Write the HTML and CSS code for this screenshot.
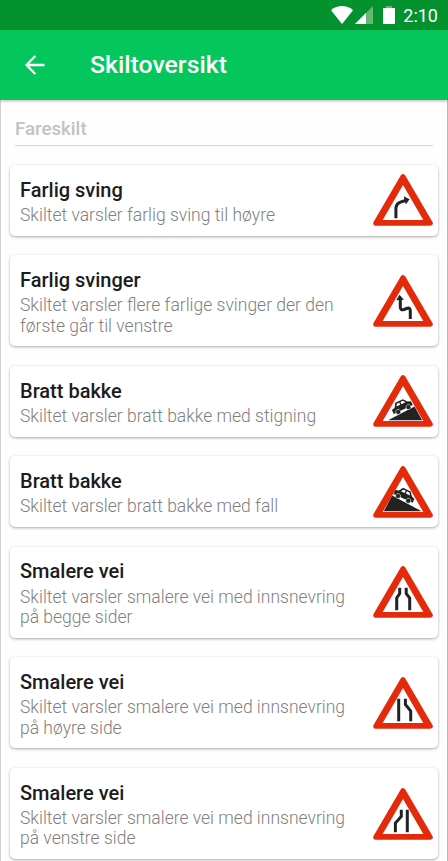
FILE: index.html
```html
<!DOCTYPE html>
<html lang="no">
<head>
    <meta charset="UTF-8">
    <meta name="viewport" content="width=device-width, initial-scale=1.0">
    <title>Skiltoversikt</title>
    <link rel="stylesheet" href="styles.css">
</head>
<body>
    <!-- Shared sign shapes -->
    <svg class="defs" width="0" height="0">
        <symbol id="triangle" viewBox="0 0 60 52">
            <path d="M30 2.6L57.3 49.2H2.7Z" fill="#e32b0b" stroke="#e32b0b" stroke-width="5" stroke-linejoin="round"/>
            <path d="M30 11L50.3 46H9.7Z" fill="#fff"/>
        </symbol>
        <symbol id="car" viewBox="0 0 22 12" overflow="visible">
            <path d="M0.500 9.500V5.200L4 4.200L6.500 0H15L18 4L21.500 5.200V9.500Z" fill="#222"/>
            <path d="M6 4L7.600 1.500H10.200V4ZM11.500 4V1.500H14.200L16 4Z" fill="#fff"/>
            <circle cx="5.400" cy="9.500" r="2.500" fill="#222" stroke="#fff" stroke-width=".5"/>
            <circle cx="16.700" cy="9.500" r="2.500" fill="#222" stroke="#fff" stroke-width=".5"/>
        </symbol>
    </svg>

    <div class="screen">
        <div class="status-bar">
            <svg class="wifi" width="22" height="18" viewBox="0 0 22 18"><path d="M0 4.200C6.500 -1.400 15.500 -1.400 22 4.200L11 18Z" fill="#fff"/></svg>
            <svg class="signal" width="18" height="18" viewBox="0 0 18 18"><path d="M18 0V18H0Z" fill="#65b876"/><path d="M11 7V18H0Z" fill="#fff"/></svg>
            <svg class="battery" width="12" height="18" viewBox="0 0 12 18"><path d="M3 0H9V2H3Z" fill="#65b876"/><path d="M0 2H12V17Q12 18 11 18H1Q0 18 0 17Z" fill="#fff"/></svg>
            <span class="clock">2:10</span>
        </div>

        <header>
            <svg class="back" width="20" height="20" viewBox="0 0 20 20"><path d="M19.500 10H1.800M10.300 1L1.500 10L10.300 19" fill="none" stroke="#fff" stroke-width="2.300"/></svg>
            <h1>Skiltoversikt</h1>
        </header>

        <main>
            <h2>Fareskilt</h2>

            <div class="card">
                <div class="text">
                    <h3>Farlig sving</h3>
                    <p>Skiltet varsler farlig sving til høyre</p>
                </div>
                <svg class="sign" viewBox="0 0 60 52">
                    <use href="#triangle"/>
                    <path class="line" d="M22.900 44.300V35Q22.900 29 28.500 27.700L32.500 26.500"/>
                    <path class="fill" d="M30.600 22.300L36.600 25.200L32.800 30.500Z"/>
                </svg>
            </div>

            <div class="card">
                <div class="text">
                    <h3>Farlig svinger</h3>
                    <p>Skiltet varsler flere farlige svinger der den første går til venstre</p>
                </div>
                <svg class="sign" viewBox="0 0 60 52">
                    <use href="#triangle"/>
                    <path class="line" d="M37.300 44V36Q37.300 32 33.500 33.500L31 34.500Q27.300 35.800 27.300 32V24"/>
                    <path class="fill" d="M26.500 19.800L30.900 24.800L23.200 25.200Z"/>
                </svg>
            </div>

            <div class="card">
                <div class="text">
                    <h3>Bratt bakke</h3>
                    <p>Skiltet varsler bratt bakke med stigning</p>
                </div>
                <svg class="sign" viewBox="0 0 60 52">
                    <use href="#triangle"/>
                    <path class="fill" d="M15 45.200L41.500 31.500L49.200 45.200Z"/>
                    <use href="#car" width="22" height="12" transform="translate(28.800 31.300) rotate(-25) translate(-11 -6)"/>
                </svg>
            </div>

            <div class="card">
                <div class="text">
                    <h3>Bratt bakke</h3>
                    <p>Skiltet varsler bratt bakke med fall</p>
                </div>
                <svg class="sign" viewBox="0 0 60 52">
                    <use href="#triangle"/>
                    <path class="fill" d="M10.800 45.200L19.200 29.500L48.500 45.200Z"/>
                    <use href="#car" width="22" height="12" transform="translate(31.600 29.200) rotate(25) translate(-11 -6)"/>
                </svg>
            </div>

            <div class="card">
                <div class="text">
                    <h3>Smalere vei</h3>
                    <p>Skiltet varsler smalere vei med innsnevring på begge sider</p>
                </div>
                <svg class="sign" viewBox="0 0 60 52">
                    <use href="#triangle"/>
                    <path class="line" d="M26.700 21.700V27.600L23.700 32V44.300M33.200 21.700V27.600L36.700 32V44.300"/>
                </svg>
            </div>

            <div class="card">
                <div class="text">
                    <h3>Smalere vei</h3>
                    <p>Skiltet varsler smalere vei med innsnevring på høyre side</p>
                </div>
                <svg class="sign" viewBox="0 0 60 52">
                    <use href="#triangle"/>
                    <path class="line" d="M25.700 21.700V44.300M32.400 21.700V27.500L37.700 34V44.300"/>
                </svg>
            </div>

            <div class="card">
                <div class="text">
                    <h3>Smalere vei</h3>
                    <p>Skiltet varsler smalere vei med innsnevring på venstre side</p>
                </div>
                <svg class="sign" viewBox="0 0 60 52">
                    <use href="#triangle"/>
                    <path class="line" d="M28.300 21.700V28.500L22.400 35V44.300M34.300 21.700V44.300"/>
                </svg>
            </div>
        </main>
    </div>
</body>
</html>
```

FILE: styles.css
```css
/* General Styling */
* {
    box-sizing: border-box;
}

body {
    margin: 0;
    font-family: Roboto, sans-serif;
    background-color: #fff;
}

h1, h2, h3, p {
    margin: 0;
}

.defs {
    display: block;
}

.screen {
    height: 861px;
    overflow: hidden;
    background: linear-gradient(#d0d0d0, #d0d0d0) left / 1px 100% no-repeat,
        linear-gradient(#b8b8b8, #b8b8b8) right / 1px 100% no-repeat, #fefefe;
}

/* Top bars */
.status-bar {
    display: flex;
    align-items: center;
    justify-content: flex-end;
    height: 30px;
    padding-right: 10px;
    background-color: #03922d;
    color: #fff;
}

.signal {
    margin-left: 2px;
}

.battery {
    margin: 0 8px 0 10px;
}

.clock {
    font-size: 18px;
    line-height: 30px;
    padding-top: 2px;
}

header {
    display: flex;
    align-items: center;
    height: 70px;
    padding-left: 25px;
    background-color: #03c75d;
    color: #fff;
    box-shadow: 0 1px 3px rgba(60, 0, 30, 0.3);
}

header h1 {
    margin-left: 45px;
    font-size: 24.8px;
    font-weight: 500;
    line-height: 30px;
}

/* Sign list */
main {
    padding: 0 10px;
}

main h2 {
    height: 46px;
    margin: 0 5px 19px;
    padding-top: 17px;
    border-bottom: 1px solid #d6d6d6;
    color: #c2c2c2;
    font-size: 18.7px;
    font-weight: 500;
    line-height: 24px;
}

.card {
    display: flex;
    align-items: center;
    justify-content: space-between;
    margin-bottom: 19.6px;
    padding: 11.6px 5px 10.3px 10px;
    border-radius: 5px;
    background-color: #fff;
    box-shadow: 0 1px 3px rgba(0, 0, 0, 0.34);
}

.text {
    width: 335px;
}

.card h3 {
    color: #1c1c1c;
    font-size: 20px;
    font-weight: 500;
    line-height: 26px;
}

.card p {
    margin-top: 2.4px;
    color: #808080;
    font-size: 17.5px;
    font-weight: 300;
    line-height: 20.4px;
}

.sign {
    flex: none;
    width: 60px;
    height: 52px;
    margin: -7px 0 -6px;
}

.sign .line {
    fill: none;
    stroke: #202225;
    stroke-width: 3;
}

.sign .fill {
    fill: #222;
}
```
